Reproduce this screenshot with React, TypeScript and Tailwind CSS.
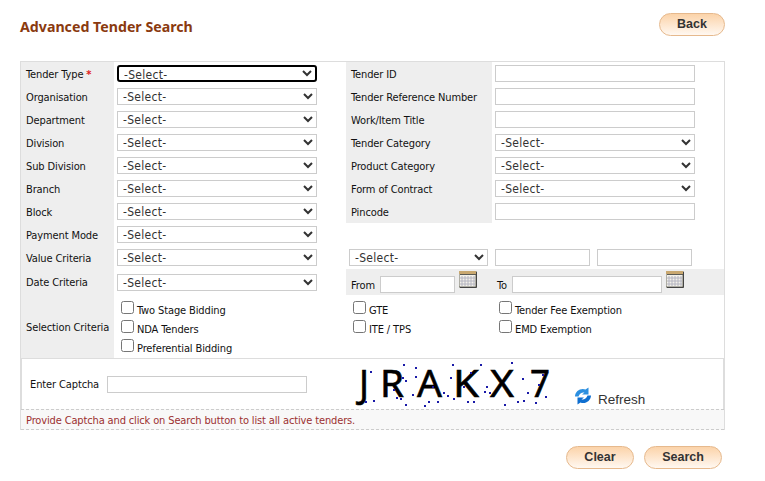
const labelFont = "font-['DejaVu_Sans_Condensed','DejaVu_Sans',sans-serif] text-[11px] tracking-[-0.12px] text-[#111]";

const Label = ({ children }: { children: React.ReactNode }) => (
  <div className={`bg-[#eeeeee] pl-[5px] pt-[3px] flex items-center ${labelFont}`}>{children}</div>
);

const Select = ({ width = "w-[200px]", focused = false }: { width?: string; focused?: boolean }) => (
  <select
    className={`${width} h-[17px] bg-white pl-[1px] font-['DejaVu_Sans_Condensed','DejaVu_Sans',sans-serif] text-[12px] leading-[13px] tracking-[0.3px] text-[#333] ${
      focused ? "border-2 border-black rounded-[3px]" : "border border-[#cccccc]"
    }`}
  >
    <option>-Select-</option>
  </select>
);

const Input = ({ width = "w-[200px]" }: { width?: string }) => (
  <input type="text" className={`${width} h-[17px] bg-white border border-[#cccccc]`} />
);

const Cell = ({ children }: { children?: React.ReactNode }) => (
  <div className="pl-[3px] flex items-center">{children}</div>
);

const Check = ({ text }: { text: string }) => (
  <div className="flex h-[19px] items-start">
    <input type="checkbox" className="w-[13px] h-[13px] m-0" />
    <span className={`ml-[3px] mt-[2px] leading-[16px] whitespace-nowrap ${labelFont}`}>{text}</span>
  </div>
);

const Calendar = () => (
  <svg width="18" height="17" viewBox="0 0 18 17" className="shrink-0 mb-[5px] ml-[4px]">
    <rect x="0" y="0" width="17" height="16" fill="#f3f1ea" stroke="#6b6b5e" />
    <rect x="0" y="0" width="17" height="3" fill="#c9a870" />
    <rect x="1" y="3" width="16" height="1" fill="#5b5b55" />
    <path d="M3 5v10M6 5v10M9 5v10M12 5v10M15 5v10M1 7h15M1 10h15M1 13h15" stroke="#b4b4c0" strokeWidth="1" />
    <path d="M17.5 1v15.5H1" stroke="#444" strokeWidth="1" fill="none" />
  </svg>
);

const Button = ({ text, width }: { text: string; width: string }) => (
  <button
    className={`${width} h-[23px] rounded-full border border-[#e6b98d] bg-gradient-to-b from-[#fbd3a9] to-[#fff8f1] font-['Liberation_Sans',sans-serif] text-[12.5px] font-bold text-[#333]`}
  >
    {text}
  </button>
);

const dots = [
  [60, 36], [158, 16], [195, 24], [165, 62], [195, 50], [155, 55], [305, 14], [390, 16], [482, 8], [300, 54],
  [360, 40], [408, 80], [517, 58], [577, 44], [585, 112], [565, 75], [530, 100], [520, 122], [500, 125], [555, 128],
  [462, 134], [418, 100], [403, 95], [350, 125], [368, 125], [308, 116], [278, 100], [290, 108], [262, 127], [235, 125],
  [222, 139], [165, 135], [185, 104], [150, 118], [138, 115], [130, 90], [68, 122], [45, 125], [340, 80], [245, 80],
];

// letter, x, width as measured on the captcha
const letters: [string, number, number][] = [
  ["J", 9, 10],
  ["R", 30, 24],
  ["A", 67, 25],
  ["K", 103, 26],
  ["X", 140, 24],
  ["7", 180, 20],
];

const Captcha = () => (
  <svg width="210" height="50" viewBox="0 0 210 50" className="shrink-0 overflow-visible">
    {letters.map(([ch, x, w]) => (
      <text
        key={ch}
        x={x}
        y="38"
        fontFamily="Noto Sans"
        fontSize="39"
        fill="#000"
        stroke="#000"
        strokeWidth="0.6"
        textLength={w}
        lengthAdjust="spacingAndGlyphs"
      >
        {ch}
      </text>
    ))}
    {dots.map(([x, y], i) => (
      <rect key={i} x={Math.round(x / 3)} y={Math.round(y / 3)} width="2" height="2" fill="#1a1aa8" />
    ))}
  </svg>
);

const RefreshIcon = () => (
  <svg width="18" height="18" viewBox="0 0 18 18" className="shrink-0">
    <path d="M1 9.5C1 4 7 0.5 11.5 2.5L14.5 0.5V7.5H8L10.5 5.5C8 5 5.5 6.5 4.5 9.5Z" fill="#2b8fe0" />
    <path d="M17 8.5C17 14 11 17.5 6.5 15.5L3.5 17.5V10.5H10L7.5 12.5C10 13 12.5 11.5 13.5 8.5Z" fill="#0f6fd0" />
  </svg>
);

export default function App() {
  const left = ["Organisation", "Department", "Division", "Sub Division", "Branch"];
  const right: [string, boolean][] = [
    ["Tender Reference Number", false],
    ["Work/Item Title", false],
    ["Tender Category", true],
    ["Product Category", true],
    ["Form of Contract", true],
  ];

  return (
    <div className="w-[765px] h-[481px] bg-white pl-5 overflow-hidden">
      <div className="w-[705px] h-[61px] flex justify-between items-start">
        <h1 className="mt-[17px] font-['Noto_Sans',sans-serif] text-[14.2px] leading-5 font-bold text-[#8a3a0f]">
          Advanced Tender Search
        </h1>
        <div className="mt-[13px] flex">
          <Button text="Back" width="w-[66px]" />
        </div>
      </div>

      <div className="w-[705px] border border-[#dddddd] border-b-0">
        <div className="grid grid-cols-[93px_232px_146px_232px] grid-rows-[repeat(9,23px)_26px_63px]">
          <Label>
            Tender Type <span className="ml-[3px] text-[#e02020] font-bold">*</span>
          </Label>
          <Cell>
            <Select focused />
          </Cell>
          <Label>Tender ID</Label>
          <Cell>
            <Input />
          </Cell>

          {left.map((name, i) => (
            <div key={name} className="contents">
              <Label>{name}</Label>
              <Cell>
                <Select />
              </Cell>
              <Label>{right[i][0]}</Label>
              <Cell>{right[i][1] ? <Select /> : <Input />}</Cell>
            </div>
          ))}

          <Label>Block</Label>
          <Cell>
            <Select />
          </Cell>
          <Label>Pincode</Label>
          <Cell>
            <Input />
          </Cell>

          <Label>Payment Mode</Label>
          <Cell>
            <Select />
          </Cell>
          <div />
          <div />

          <Label>Value Criteria</Label>
          <Cell>
            <Select />
          </Cell>
          <Cell>
            <Select width="w-[139px]" />
          </Cell>
          <div className="pl-[3px] flex items-center gap-[7px]">
            <Input width="w-[95px]" />
            <Input width="w-[95px]" />
          </div>

          <Label>Date Criteria</Label>
          <Cell>
            <Select />
          </Cell>
          <div className={`col-span-2 bg-[#eeeeee] pl-[5px] flex items-end pb-[2px] ${labelFont}`}>
            <span className="w-[29px] mb-[-1px]">From</span>
            <Input width="w-[75px]" />
            <Calendar />
            <span className="ml-[20px] w-[15px] mb-[-1px]">To</span>
            <Input width="w-[150px]" />
            <Calendar />
          </div>

          <Label>Selection Criteria</Label>
          <div className="pl-[7px] pt-[6px]">
            <Check text="Two Stage Bidding" />
            <Check text="NDA Tenders" />
            <Check text="Preferential Bidding" />
          </div>
          <div className="col-span-2 pl-[7px] pt-[6px] grid grid-cols-[146px_1fr] content-start">
            <Check text="GTE" />
            <Check text="Tender Fee Exemption" />
            <Check text="ITE / TPS" />
            <Check text="EMD Exemption" />
          </div>
        </div>

        <div className="h-[51px] border-t border-x border-[#dddddd] flex items-center">
          <span className={`ml-[8px] mt-[3px] w-[77px] whitespace-nowrap ${labelFont}`}>Enter Captcha</span>
          <Input />
          <div className="ml-[43px]">
            <Captcha />
          </div>
          <div className="ml-[14px] mt-[23px] flex items-center">
            <RefreshIcon />
            <span className="ml-[6px] translate-y-[5px] font-['Liberation_Sans',sans-serif] text-[13.5px] text-[#333]">Refresh</span>
          </div>
        </div>

        <div className="h-[21px] bg-[#f8f8f8] border-y border-dashed border-[#cccccc] pl-[5px] pt-[3px] flex items-center font-['DejaVu_Sans_Condensed','DejaVu_Sans',sans-serif] text-[11px] tracking-[-0.14px] text-[#9c3030]">
          Provide Captcha and click on Search button to list all active tenders.
        </div>
      </div>

      <div className="w-[702px] mt-[16px] flex justify-end gap-[10px]">
        <Button text="Clear" width="w-[68px]" />
        <Button text="Search" width="w-[78px]" />
      </div>
    </div>
  );
}
